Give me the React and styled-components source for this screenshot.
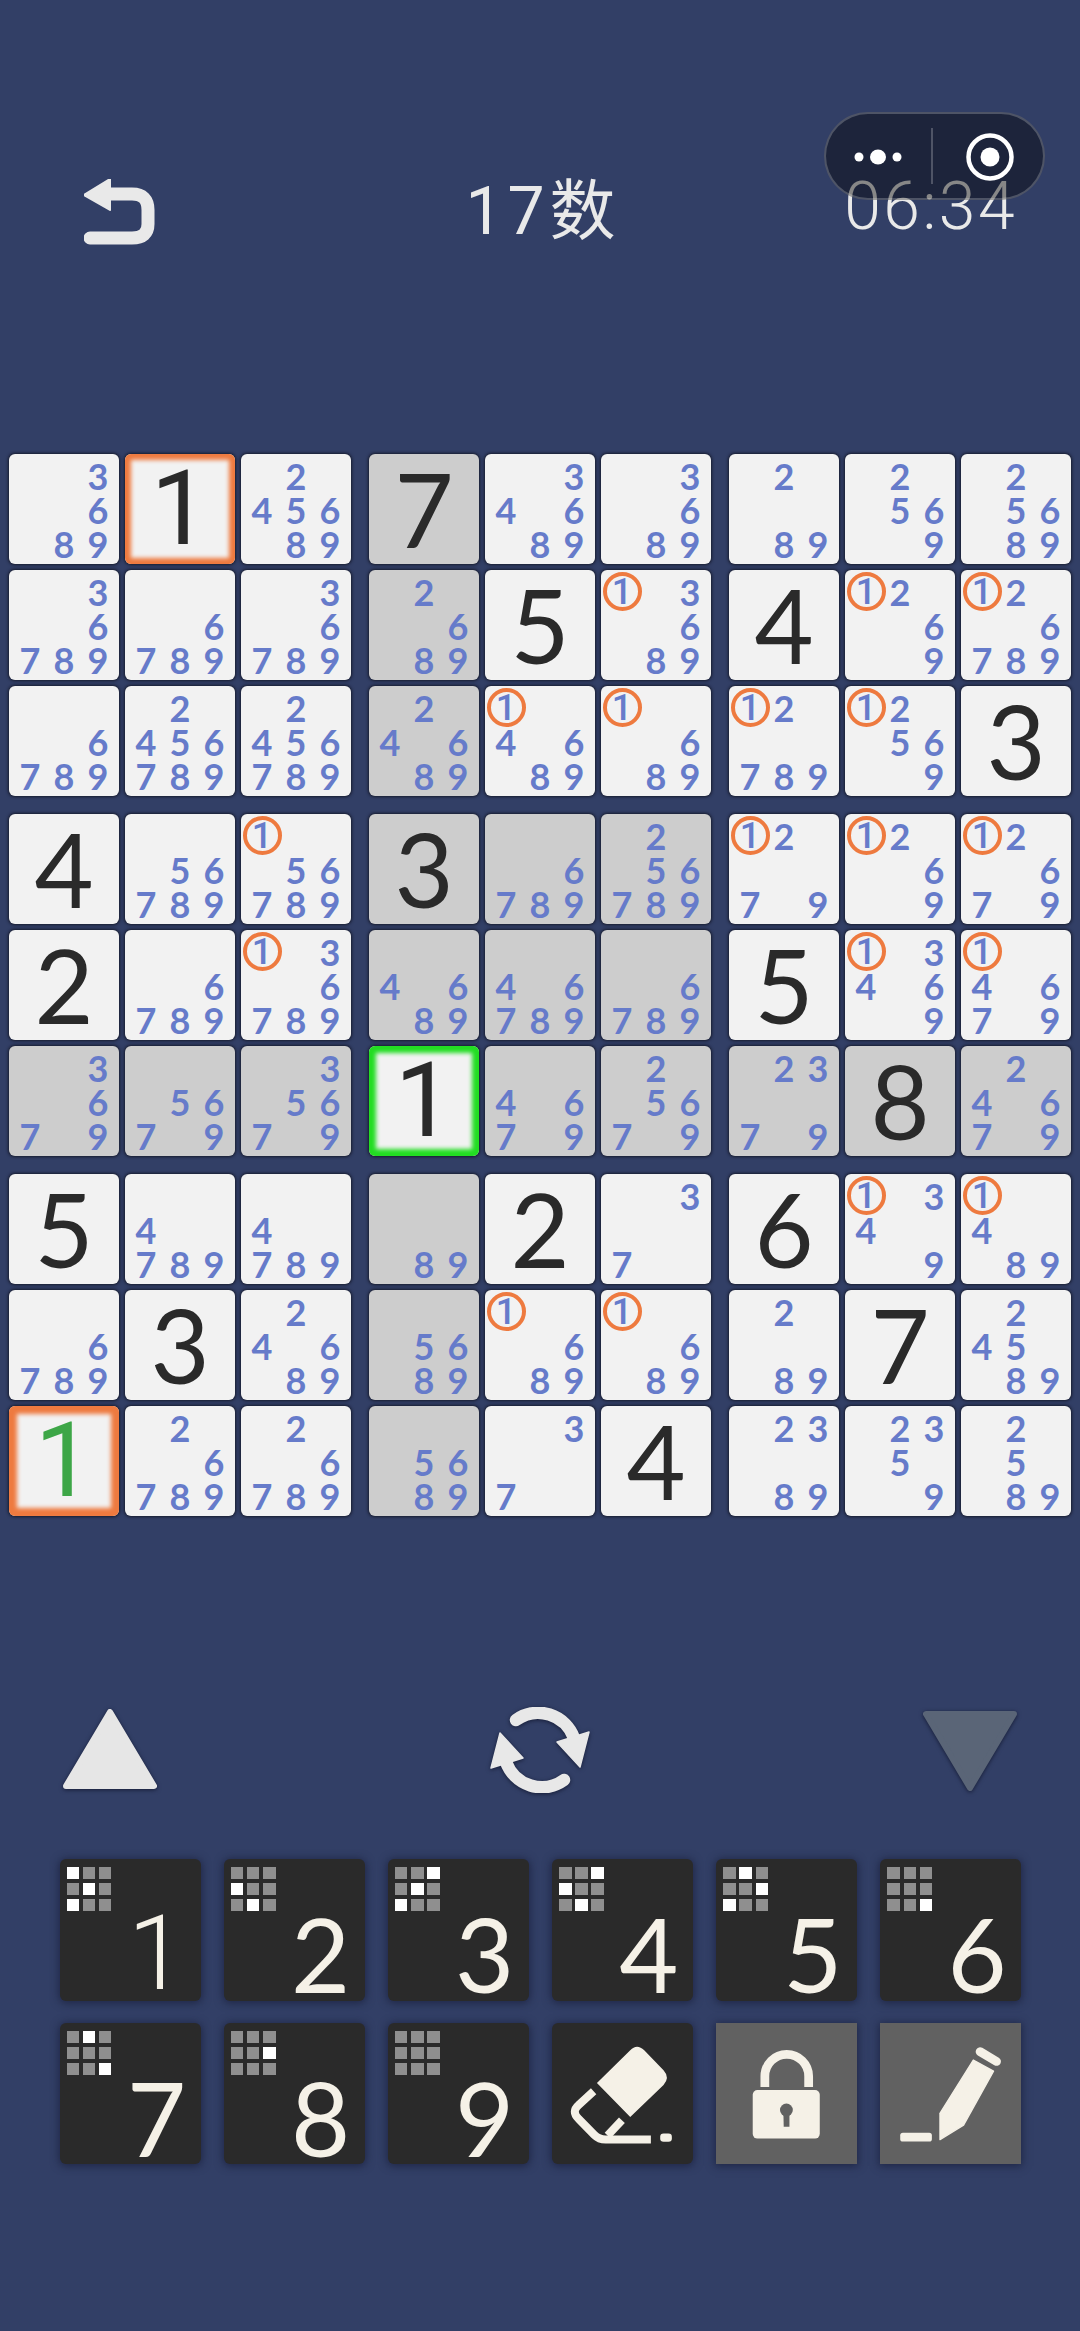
import React from "react";
import styled, { createGlobalStyle } from "styled-components";

const colours = {
  page: "#323f66",
  cell: "#f2f2f2",
  shaded: "#cdcdcd",
  note: "#667bca",
  ink: "#2a2a2a",
  orange: "#ee7a3f",
  green: "#22dd22",
  cream: "#f5f1e7"
};

const digitFont = `"Lato", "Noto Sans", sans-serif`;
// Lato's 1 has a foot the reference hasn't
const oneFont = `"Roboto", "Noto Sans", sans-serif`;

const GlobalStyle = createGlobalStyle`
  html, body {
    margin: 0;
    padding: 0;
    background: ${colours.page};
  }
`;

const Page = styled.div`
  position: relative;
  width: 1080px;
  height: 2331px;
  overflow: hidden;
  background: ${colours.page};
  display: flex;
  flex-direction: column;
  font-family: ${digitFont};
`;

const Header = styled.header`
  display: grid;
  grid-template-columns: 1fr auto 1fr;
  align-items: center;
  height: 70px;
  margin-top: 177px;
`;

const BackIcon = styled.svg`
  display: block;
  width: 71px;
  height: 66px;
  margin-left: 84px;
`;

const Title = styled.div`
  margin-left: 6px;
  font-family: "Roboto", "Noto Sans CJK TC", sans-serif;
  font-weight: 400;
  font-size: 66px;
  line-height: 70px;
  letter-spacing: 5px;
  color: #e9e9e9;
`;

const Timer = styled.div`
  justify-self: end;
  margin-right: 63px;
  margin-top: -10px;
  font-family: "Roboto", sans-serif;
  font-weight: 300;
  font-size: 66px;
  line-height: 70px;
  letter-spacing: 2.5px;
  color: #e9e9e9;
`;

const Capsule = styled.div`
  position: absolute;
  top: 112px;
  right: 35px;
  width: 221px;
  height: 88px;
  box-sizing: border-box;
  border: 2px solid rgba(255, 255, 255, 0.22);
  border-radius: 44px;
  background: rgba(0, 0, 0, 0.42);
`;

const CapsuleIcon = styled.svg`
  display: block;
  width: 217px;
  height: 84px;
`;

const Board = styled.main`
  display: grid;
  grid-template-columns: repeat(3, 342px);
  gap: 18px;
  margin: 207px 0 0 9px;
`;

const Box = styled.div`
  display: grid;
  grid-template-columns: repeat(3, 110px);
  grid-auto-rows: 110px;
  gap: 6px;
`;

const ringSize = { plain: 0, orange: 6, wide: 8, green: 7 };

const Cell = styled.div`
  position: relative;
  display: flex;
  align-items: center;
  justify-content: center;
  border-radius: 6px;
  background: ${(p) => (p.$shaded ? colours.shaded : colours.cell)};
  box-shadow: 0 0 3px 1px rgba(18, 20, 34, 0.85)
    ${(p) =>
      p.$ring !== "plain"
        ? `, inset 0 0 4px ${ringSize[p.$ring]}px ${
            p.$ring === "green" ? colours.green : colours.orange
          }`
        : ""};
`;

const BigDigit = styled.span`
  font-family: ${(p) => (p.$one ? oneFont : digitFont)};
  font-size: ${(p) => (p.$one ? 104 : 102)}px;
  line-height: 110px;
  font-weight: 400;
  color: ${(p) => (p.$green ? "#3da647" : colours.ink)};
`;

const Notes = styled.div`
  flex: 1;
  align-self: stretch;
  display: grid;
  grid-template-columns: repeat(3, 34px);
  grid-template-rows: repeat(3, 34px);
  padding: 5px 4px;
`;

const Note = styled.span`
  position: relative;
  display: flex;
  align-items: center;
  justify-content: center;
  font-family: ${(p) => (p.$one ? oneFont : digitFont)};
  font-size: 36px;
  line-height: 34px;
  font-weight: ${(p) => (p.$one ? 500 : 700)};
  color: ${colours.note};
`;

const NoteRing = styled.i`
  position: absolute;
  top: -3px;
  left: -2.5px;
  width: 39px;
  height: 39px;
  box-sizing: border-box;
  border: 4px solid ${colours.orange};
  border-radius: 50%;
`;

const Controls = styled.div`
  display: flex;
  justify-content: space-between;
  align-items: center;
  margin-top: 191px;
  padding: 0 63px;
`;

const ControlIcon = styled.svg`
  display: block;
  width: ${(p) => p.$w}px;
  height: ${(p) => p.$h}px;
  filter: drop-shadow(0 1px 2px rgba(12, 16, 38, 0.75));
`;

const Keypad = styled.div`
  display: grid;
  grid-template-columns: repeat(6, 141.5px);
  grid-auto-rows: 141.5px;
  column-gap: 22.6px;
  row-gap: 22px;
  margin: 66px 0 0 59.5px;
`;

const Key = styled.div`
  display: flex;
  flex-direction: column;
  border-radius: ${(p) => (p.$off ? 0 : 6)}px;
  background: ${(p) => (p.$off ? "#616161" : "#2a2a2a")};
  box-shadow: 0 1px 8px 1px rgba(20, 24, 50, 0.65);
`;

const MiniGrid = styled.div`
  display: grid;
  grid-template-columns: repeat(3, 12.3px);
  grid-auto-rows: 12.3px;
  gap: 3.8px;
  padding: 8px 0 0 7.5px;
`;

const MiniDot = styled.i`
  background: ${(p) => (p.$on ? "#ffffff" : "#8f8f8f")};
`;

const KeyDigit = styled.span`
  align-self: flex-start;
  width: 90px;
  margin: 5px 0 0 52px;
  text-align: center;
  font-family: ${(p) => (p.$one ? oneFont : digitFont)};
  font-size: ${(p) => (p.$one ? 104 : 102)}px;
  line-height: 76px;
  font-weight: ${(p) => (p.$one ? 300 : 400)};
  color: ${colours.cream};
`;

const KeyIcon = styled.svg`
  display: block;
  width: 141.5px;
  height: 141.5px;
`;

// "=n" is a given digit, anything else is the list of pencil marks
const rows = [
  ["3689", "=1", "245689", "=7", "34689", "3689", "289", "2569", "25689"],
  ["36789", "6789", "36789", "2689", "=5", "13689", "=4", "1269", "126789"],
  ["6789", "2456789", "2456789", "24689", "14689", "1689", "12789", "12569", "=3"],
  ["=4", "56789", "156789", "=3", "6789", "256789", "1279", "1269", "12679"],
  ["=2", "6789", "136789", "4689", "46789", "6789", "=5", "13469", "14679"],
  ["3679", "5679", "35679", "=1", "4679", "25679", "2379", "=8", "24679"],
  ["=5", "4789", "4789", "89", "=2", "37", "=6", "1349", "1489"],
  ["6789", "=3", "24689", "5689", "1689", "1689", "289", "=7", "24589"],
  ["=1", "26789", "26789", "5689", "37", "=4", "2389", "2359", "2589"]
];

const ringAt = { "0-1": "orange", "8-0": "wide", "5-3": "green" };

const isShaded = (r, c) =>
  !ringAt[`${r}-${c}`] && (r === 5 || c === 3 || (r >= 3 && r <= 5 && c >= 3 && c <= 5));

const keyDots = {
  1: [0, 4, 6],
  2: [3, 7],
  3: [2, 4, 6],
  4: [2, 3, 7],
  5: [1, 5, 6],
  6: [8],
  7: [1, 8],
  8: [5],
  9: []
};

const SudokuCell = ({ value, r, c }) => {
  const ring = ringAt[`${r}-${c}`] || "plain";
  return (
    <Cell $shaded={isShaded(r, c)} $ring={ring}>
      {value[0] === "=" ? (
        <BigDigit $one={value === "=1"} $green={r === 8 && c === 0}>
          {value.slice(1)}
        </BigDigit>
      ) : (
        <Notes>
          {[1, 2, 3, 4, 5, 6, 7, 8, 9].map((n) => (
            <Note key={n} $one={n === 1}>
              {value.includes(String(n)) ? n : ""}
              {n === 1 && value.includes("1") && <NoteRing />}
            </Note>
          ))}
        </Notes>
      )}
    </Cell>
  );
};

const boxes = [0, 1, 2, 3, 4, 5, 6, 7, 8].map((b) => {
  const top = Math.floor(b / 3) * 3;
  const left = (b % 3) * 3;
  const cells = [];
  for (let r = top; r < top + 3; r++) {
    for (let c = left; c < left + 3; c++) {
      cells.push({ r, c, value: rows[r][c] });
    }
  }
  return cells;
});

const RefreshHalf = () => (
  <>
    <path
      d="M-24 -30 A38 38 0 0 1 34 -12"
      fill="none"
      stroke="#e8e8e8"
      strokeWidth="12.5"
      strokeLinecap="round"
    />
    <path d="M49 -18 L40 17 L17 -8 Z" fill="#e8e8e8" stroke="#e8e8e8" strokeWidth="1.5" strokeLinejoin="round" />
  </>
);

export default function App() {
  return (
    <Page>
      <GlobalStyle />
      <Header>
        <BackIcon viewBox="84 179 71 66">
          <path d="M110 179 L84 195 L110 210 Z" fill="#e9e9e9" stroke="#e9e9e9" strokeWidth="2" strokeLinejoin="round" />
          <path
            d="M106 194 H132 Q148 194 148 210 V224 Q148 238 132 238 H90"
            fill="none"
            stroke="#e9e9e9"
            strokeWidth="13"
            strokeLinecap="round"
          />
        </BackIcon>
        <Title>17数</Title>
        <Timer>06:34</Timer>
      </Header>

      <Capsule>
        <CapsuleIcon viewBox="826 114 217 84">
          <circle cx="859" cy="157" r="4.5" fill="#fff" />
          <ellipse cx="878" cy="157" rx="8" ry="7.5" fill="#fff" />
          <circle cx="897" cy="157" r="4.5" fill="#fff" />
          <path d="M932 128 V184" stroke="rgba(255,255,255,0.3)" strokeWidth="1.5" />
          <circle cx="990" cy="157" r="21.5" fill="none" stroke="#fff" strokeWidth="4.5" />
          <circle cx="990" cy="157" r="9.5" fill="#fff" />
        </CapsuleIcon>
      </Capsule>

      <Board>
        {boxes.map((cells, b) => (
          <Box key={b}>
            {cells.map((cell) => (
              <SudokuCell key={`${cell.r}-${cell.c}`} {...cell} />
            ))}
          </Box>
        ))}
      </Board>

      <Controls>
        <ControlIcon $w={94} $h={84} viewBox="0 0 94 84">
          <path d="M47 4 L91 78 H3 Z" fill="#e6e6e6" stroke="#e6e6e6" strokeWidth="6" strokeLinejoin="round" />
        </ControlIcon>
        <ControlIcon $w={100} $h={86} viewBox="-50 -43 100 86">
          <RefreshHalf />
          <g transform="rotate(180)">
            <RefreshHalf />
          </g>
        </ControlIcon>
        <ControlIcon $w={94} $h={84} viewBox="0 0 94 84">
          <path d="M3 6 H91 L47 80 Z" fill="#5a6577" stroke="#5a6577" strokeWidth="6" strokeLinejoin="round" />
        </ControlIcon>
      </Controls>

      <Keypad>
        {[1, 2, 3, 4, 5, 6, 7, 8, 9].map((n) => (
          <Key key={n}>
            <MiniGrid>
              {[0, 1, 2, 3, 4, 5, 6, 7, 8].map((i) => (
                <MiniDot key={i} $on={keyDots[n].includes(i)} />
              ))}
            </MiniGrid>
            <KeyDigit $one={n === 1}>{n}</KeyDigit>
          </Key>
        ))}
        <Key>
          <KeyIcon viewBox="65 70 425 425">
            <path d="M300 152 Q320 130 342 152 L400 212 Q420 234 400 256 L300 352 L200 250 Z" fill={colours.cream} />
            <path
              d="M190 275 L145 316 Q122 336 145 358 L192 406 Q206 420 226 420 H362"
              fill="none"
              stroke={colours.cream}
              strokeWidth="24"
            />
            <path d="M275 362 L232 408" fill="none" stroke={colours.cream} strokeWidth="24" />
            <rect x="390" y="402" width="35" height="25" rx="10" fill={colours.cream} />
          </KeyIcon>
        </Key>
        <Key $off>
          <KeyIcon viewBox="558 72 420 420">
            <path d="M703 262 V230 A65 65 0 0 1 833 230 V262" fill="none" stroke={colours.cream} strokeWidth="26" />
            <rect x="667" y="271" width="199" height="144" rx="14" fill={colours.cream} />
            <circle cx="767" cy="330" r="19" fill="#616161" />
            <path d="M758 336 H776 L776 380 H759 Z" fill="#616161" />
          </KeyIcon>
        </Key>
        <Key $off>
          <KeyIcon viewBox="1050 72 420 420">
            <rect x="1110" y="398" width="94" height="26" rx="8" fill={colours.cream} />
            <path d="M1327 182 L1387 215 L1298 375 L1228 418 V340 Z" fill={colours.cream} stroke={colours.cream} strokeWidth="4" strokeLinejoin="round" />
            <path d="M1347 157 L1396 186" fill="none" stroke={colours.cream} strokeWidth="26" strokeLinecap="round" />
          </KeyIcon>
        </Key>
      </Keypad>
    </Page>
  );
}
